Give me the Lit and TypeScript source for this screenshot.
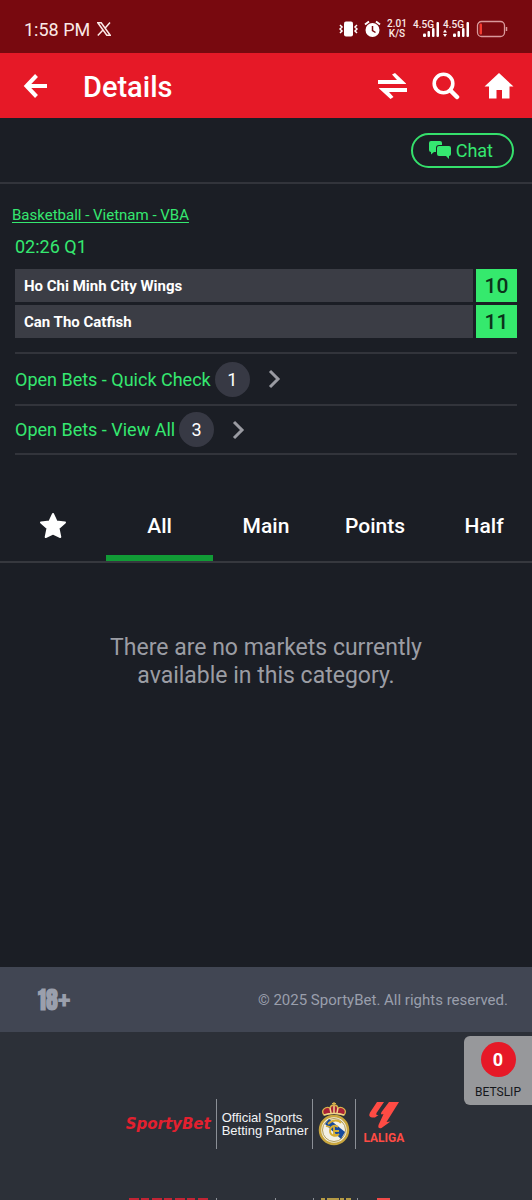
import { LitElement, html, css, svg } from "lit";
import { customElement, property, state } from "lit/decorators.js";
import { classMap } from "lit/directives/class-map.js";

const base = css`
  * { box-sizing: border-box; }
  button { font: inherit; color: inherit; background: none; border: 0; padding: 0; margin: 0; cursor: pointer; }
  a { color: inherit; text-decoration: none; }
  svg { display: block; flex: none; }
`;

@customElement("status-bar")
class StatusBar extends LitElement {
  static styles = [base, css`
    :host { display: flex; align-items: center; height: 53px; padding: 5px 24px 0 24px; background: #78090f; color: #fbe9e7; font-size: 18px; }
    .x { margin-left: 7px; }
    .right { margin-left: auto; display: flex; align-items: center; gap: 6px; }
    .rate { font-size: 10px; line-height: 10px; font-weight: 500; text-align: center; width: 20px; }
    .signal { position: relative; width: 26px; height: 18px; }
    .net { position: absolute; left: 0; top: 0; font-size: 10px; line-height: 10px; font-weight: 500; }
    .signals { display: flex; gap: 4px; }
  `];

  signal(data: boolean) {
    return html`<span class="signal"><span class="net">4.5G</span>
      <svg width="28" height="18" viewBox="0 0 28 18" fill="#fff">
        ${data ? svg`<path d="M0 12.500l2-3 2 3zM0 14l2 3 2-3z"/>` : null}
        <rect x="10" y="13.500" width="3" height="3.500" rx="1"/><rect x="14.500" y="11" width="2.500" height="6" rx="1"/>
        <rect x="19" y="8" width="2.500" height="9" rx="1"/><rect x="23.500" y="2" width="2.500" height="15" rx="1"/>
      </svg></span>`;
  }

  render() {
    return html`
      <span>1:58 PM</span>
      <svg class="x" width="14" height="14" viewBox="0 0 14 14" fill="none" stroke="#fbe9e7" stroke-width="1.500">
        <path d="M.8.8h3.400l9 12.400H9.800zM13 .5L8 6.200M6 8L.8 13.500"/>
      </svg>
      <div class="right">
        <svg width="19" height="18" viewBox="0 0 19 18">
          <rect x="5" y="1.500" width="9" height="15" rx="2" fill="#fff"/>
          <path d="M1 5l2 2-2 2 2 2-2 2M18 5l-2 2 2 2-2 2 2 2" fill="none" stroke="#fff" stroke-width="1.500"/>
        </svg>
        <svg width="17" height="18" viewBox="0 0 17 18">
          <circle cx="8.500" cy="10" r="7" fill="#fff"/>
          <path d="M1 4.500l4-3M16 4.500l-4-3" stroke="#fff" stroke-width="2"/>
          <path d="M8.500 6v4.500l3 2" fill="none" stroke="#78090f" stroke-width="1.500"/>
        </svg>
        <span class="rate">2.01<br>K/S</span>
        <span class="signals">${this.signal(false)}${this.signal(true)}</span>
        <svg width="33" height="18" viewBox="0 0 33 18">
          <rect x="2.500" y="1.500" width="27" height="15" rx="4" fill="none" stroke="#d9999b" stroke-width="1.300"/>
          <rect x="4.500" y="3.500" width="2.500" height="11" rx="1" fill="#f23a30"/>
          <path d="M31.500 7v4" stroke="#d9999b" stroke-width="1.500"/>
        </svg>
      </div>`;
  }
}

@customElement("title-bar")
class TitleBar extends LitElement {
  static styles = [base, css`
    :host { display: flex; align-items: center; height: 65px; padding: 0 18px 0 22px; background: #e61927; color: #fff; }
    h1 { margin: 0 auto 0 34px; font-size: 29px; line-height: 36px; font-weight: 500; padding-top: 2px; }
    nav { display: flex; align-items: center; gap: 24px; }
  `];

  render() {
    return html`
      <button aria-label="Back"><svg width="27" height="26" viewBox="0 0 27 26" fill="none" stroke="#fff" stroke-width="4"><path d="M14.500 2.500L4.500 13l10 10.500M4.500 13H25"/></svg></button>
      <h1>Details</h1>
      <nav>
        <button aria-label="Switch"><svg width="30" height="28" viewBox="0 0 30 28" fill="#fff"><path d="M0 8h19l-5-5.500L17 1l11 10.500v.5H0zM29 20H11l4.500 5-3 2L1 16.500V16h28z"/></svg></button>
        <button aria-label="Search"><svg width="28" height="28" viewBox="0 0 28 28" fill="none" stroke="#fff"><circle cx="11.500" cy="11.500" r="9.300" stroke-width="3.600"/><path d="M18.500 18.500l6.500 6.500" stroke-width="4.500" stroke-linecap="round"/></svg></button>
        <button aria-label="Home"><svg width="30" height="28" viewBox="0 0 30 28" fill="#fff"><path d="M15 1l14.500 13.500H25.500v12H18V18h-5.500v8.500H5v-12H.5z"/></svg></button>
      </nav>`;
  }
}

@customElement("match-panel")
class MatchPanel extends LitElement {
  static styles = [base, css`
    :host { display: block; padding: 21px 15px 0 12px; color: #35e870; }
    .league { display: inline-block; font-size: 15px; line-height: 20px; text-decoration: underline; text-underline-offset: 2px; }
    .body { padding-left: 3px; }
    .clock { font-size: 18px; line-height: 24px; margin: 10px 0; }
    table { width: 100%; border-collapse: separate; border-spacing: 0; }
    th, td { padding: 0; height: 36px; border-bottom: 3px solid #1b1e25; }
    th { background-color: #3b3d45; color: #fff; text-align: left; font-size: 15px; font-weight: 700; padding-left: 9px; border-right: 3px solid #1b1e25; }
    td { background-color: #35e96d; color: #0b331a; width: 41px; text-align: center; font-size: 21px; font-weight: 500; }
    .open { display: flex; align-items: center; border-bottom: 2px solid #32343b; font-size: 18px; height: 49px; }
    .open.first { border-top: 2px solid #32343b; margin-top: 11px; height: 54px; }
    .count { width: 35px; height: 35px; border-radius: 50%; background: #373944; color: #fff; display: grid; place-items: center; margin: 0 18px 0 4px; }
  `];

  openBets(label: string, count: number, first: boolean) {
    return html`<a href="#" class=${classMap({ open: true, first })}>${label}<span class="count">${count}</span>
      <svg width="13" height="20" viewBox="0 0 13 20" fill="none" stroke="#9a9ba2" stroke-width="3"><path d="M2 2l8 8-8 8"/></svg></a>`;
  }

  render() {
    return html`
      <a class="league" href="#">Basketball - Vietnam - VBA</a>
      <div class="body">
        <div class="clock">02:26 Q1</div>
        <table>
          <tr><th scope="row">Ho Chi Minh City Wings</th><td>10</td></tr>
          <tr><th scope="row">Can Tho Catfish</th><td>11</td></tr>
        </table>
        ${this.openBets("Open Bets - Quick Check", 1, true)}
        ${this.openBets("Open Bets - View All", 3, false)}
      </div>`;
  }
}

@customElement("market-tabs")
class MarketTabs extends LitElement {
  @state() active = "All";

  static styles = [base, css`
    :host { display: block; margin-top: 35px; }
    .tabs { display: flex; border-bottom: 2px solid #36383e; height: 73px; overflow: hidden; }
    .tab { flex: 0 0 20%; padding-top: 6px; display: grid; place-items: center; font-size: 21px; font-weight: 500; color: #fff; border-bottom: 6px solid transparent; }
    .tab.wide { flex-basis: 21%; }
    .tab.active { border-bottom-color: #119b36; }
  `];

  render() {
    return html`<div class="tabs" role="tablist">
      <button class="tab" role="tab" aria-label="Favourites"><svg width="28" height="27" viewBox="0 0 28 27" fill="#fff" stroke="#fff" stroke-width="2" stroke-linejoin="round"><path d="M14 2l3.500 7.500 8.500 1-6.500 5.800L21.300 25 14 21.500 6.700 25l1.800-8.700L2 10.500l8.500-1z"/></svg></button>
      ${["All", "Main", "Points", "Half"].map((t) => html`<button role="tab" aria-selected=${t === this.active}
        class=${classMap({ tab: true, active: t === this.active, wide: t === "Points" })} @click=${() => (this.active = t)}>${t}</button>`)}
    </div>`;
  }
}

@customElement("sponsor-strip")
class SponsorStrip extends LitElement {
  static styles = [base, css`
    :host { display: flex; justify-content: center; align-items: center; height: 50px; color: #f3f4f6; }
    .brand { font: italic 700 15px/24px "DejaVu Sans", sans-serif; color: #e3202f; padding-right: 5px; }
    .partner { font: 13px/13px "Liberation Sans", sans-serif; padding: 0 4px 0 5px; }
    .cell { height: 50px; display: flex; align-items: center; border-left: 1px solid #8b8f96; }
    .crest { padding: 0 5px; }
    .laliga { flex-direction: column; padding: 2px 2px 0 7px; color: #ff4b44; font: 700 12px/14px Roboto, sans-serif; }
  `];

  render() {
    return html`
      <span class="brand">SportyBet</span>
      <span class="cell partner">Official Sports<br>Betting Partner</span>
      <span class="cell crest">
        <svg width="32" height="44" viewBox="0 0 32 44">
          <circle cx="16" cy="28" r="14" fill="#f2f0e6" stroke="#c9a63e" stroke-width="2.500"/>
          <circle cx="16" cy="28" r="11.500" fill="none" stroke="#a18632" stroke-width=".8"/>
          <path d="M7 22l4-5 16 13-4 7z" fill="#164a9c"/>
          <path d="M10 22c5-5 11-4 13-1M20 25c-4-3-8 0-8 4s5 7 9 3M16 25v8h4M16 29h5M8 24l4 1" fill="none" stroke="#d6ad33" stroke-width="1.800"/>
          <path d="M6 13C2 8 8 4 12 6c1-4 7-4 8 0 4-2 10 2 6 7-6-2-14-2-20 0z" fill="#a92136" stroke="#d9b34c" stroke-width="1.300"/>
          <path d="M12 6l1 5M20 6l-1 5M16 4v7M6 13c6-2 14-2 20 0" fill="none" stroke="#f0d58a" stroke-width="1.500"/>
          <path d="M16 0v4M14 1.500h4" stroke="#d9b34c" stroke-width="1.200"/>
        </svg>
      </span>
      <span class="cell laliga">
        <svg width="32" height="30" viewBox="0 0 32 30" fill="#ff4b44">
          <path d="M9 1h7L8.500 12q-1 2.500 2 2L7 16.500H4q-4-.5-2-5zM21 1h10L18.500 21l4-.5-9 6.500q-4 1-3-3l3-6.500 2-4.500-2 .5q-1-1 0-2.500z"/>
        </svg>
        <span>LALIGA</span>
      </span>`;
  }
}

@customElement("app-root")
class AppRoot extends LitElement {
  @property({ type: Number }) slipCount = 0;

  static styles = [base, css`
    :host { display: flex; flex-direction: column; min-height: 100vh; background: #1b1e25; font-family: Roboto, sans-serif; color: #fff; }
    main { flex: 1; }
    .chat-row { height: 66px; padding: 0 18px; display: flex; align-items: center; justify-content: flex-end; border-bottom: 2px solid #32343b; }
    .chat { height: 35px; padding: 0 19px 0 16px; border: 2px solid #35e06c; border-radius: 18px; color: #35e870; font-size: 18px; display: flex; align-items: center; gap: 4px; }
    .empty { margin: 71px auto 0; max-width: 340px; text-align: center; font-size: 23px; line-height: 28px; color: #9b9da4; }
    .legal { height: 65px; padding: 0 24px 0 38px; display: flex; align-items: center; justify-content: space-between; background: #414653; color: #9a9fac; font-size: 15px; }
    .age { display: flex; align-items: center; font: 700 24px/24px Impact, Anton, "Roboto Condensed", sans-serif; }
    .plus { font: 900 24px/24px Roboto, sans-serif; }
    .sponsors { position: relative; padding-top: 67px; background: #2c3038; }
    .edge { margin: 48px auto 0; }
    .slip { position: absolute; right: 0; top: 4px; width: 68px; height: 69px; border-radius: 6px 0 0 6px; background: #97989b; color: #15171b; font-size: 12px; display: flex; flex-direction: column; align-items: center; gap: 8px; padding-top: 6px; }
    .slip-count { width: 35px; height: 35px; border-radius: 50%; background: #e61927; color: #fff; font-size: 18px; font-weight: 700; display: grid; place-items: center; }
  `];

  render() {
    return html`
      <status-bar></status-bar>
      <title-bar></title-bar>
      <main>
        <div class="chat-row"><button class="chat">
          <svg width="23" height="18" viewBox="0 0 23 18" fill="#35e870"><path d="M2 0h9q2 0 2 2v2h-3q-3 0-3 3v4H5l-3 2.500V11q-2 0-2-2V2q0-2 2-2zM10 5h10q2 0 2 2v6q0 2-2 2v3l-3-3h-7q-2 0-2-2V7q0-2 2-2z"/></svg>
          Chat</button></div>
        <match-panel></match-panel>
        <market-tabs></market-tabs>
        <p class="empty">There are no markets currently available in this category.</p>
      </main>
      <footer>
        <div class="legal"><span class="age">18<span class="plus">+</span></span><span>© 2025 SportyBet. All rights reserved.</span></div>
        <div class="sponsors">
          <sponsor-strip></sponsor-strip>
          <svg class="edge" width="282" height="3" viewBox="0 0 282 3" fill="none" stroke-width="2">
            <path d="M4 2h80" stroke="#c22434" stroke-dasharray="10 2 8 3"/>
            <path d="M91 2h1M150 2h1M188 2h1M232 2h1" stroke="#8b8f96"/>
            <path d="M196 2h30" stroke="#b59a45" stroke-dasharray="4 2 12 1"/>
            <path d="M252 2h13" stroke="#f04a48"/>
          </svg>
          <button class="slip"><span class="slip-count">${this.slipCount}</span>BETSLIP</button>
        </div>
      </footer>`;
  }
}
